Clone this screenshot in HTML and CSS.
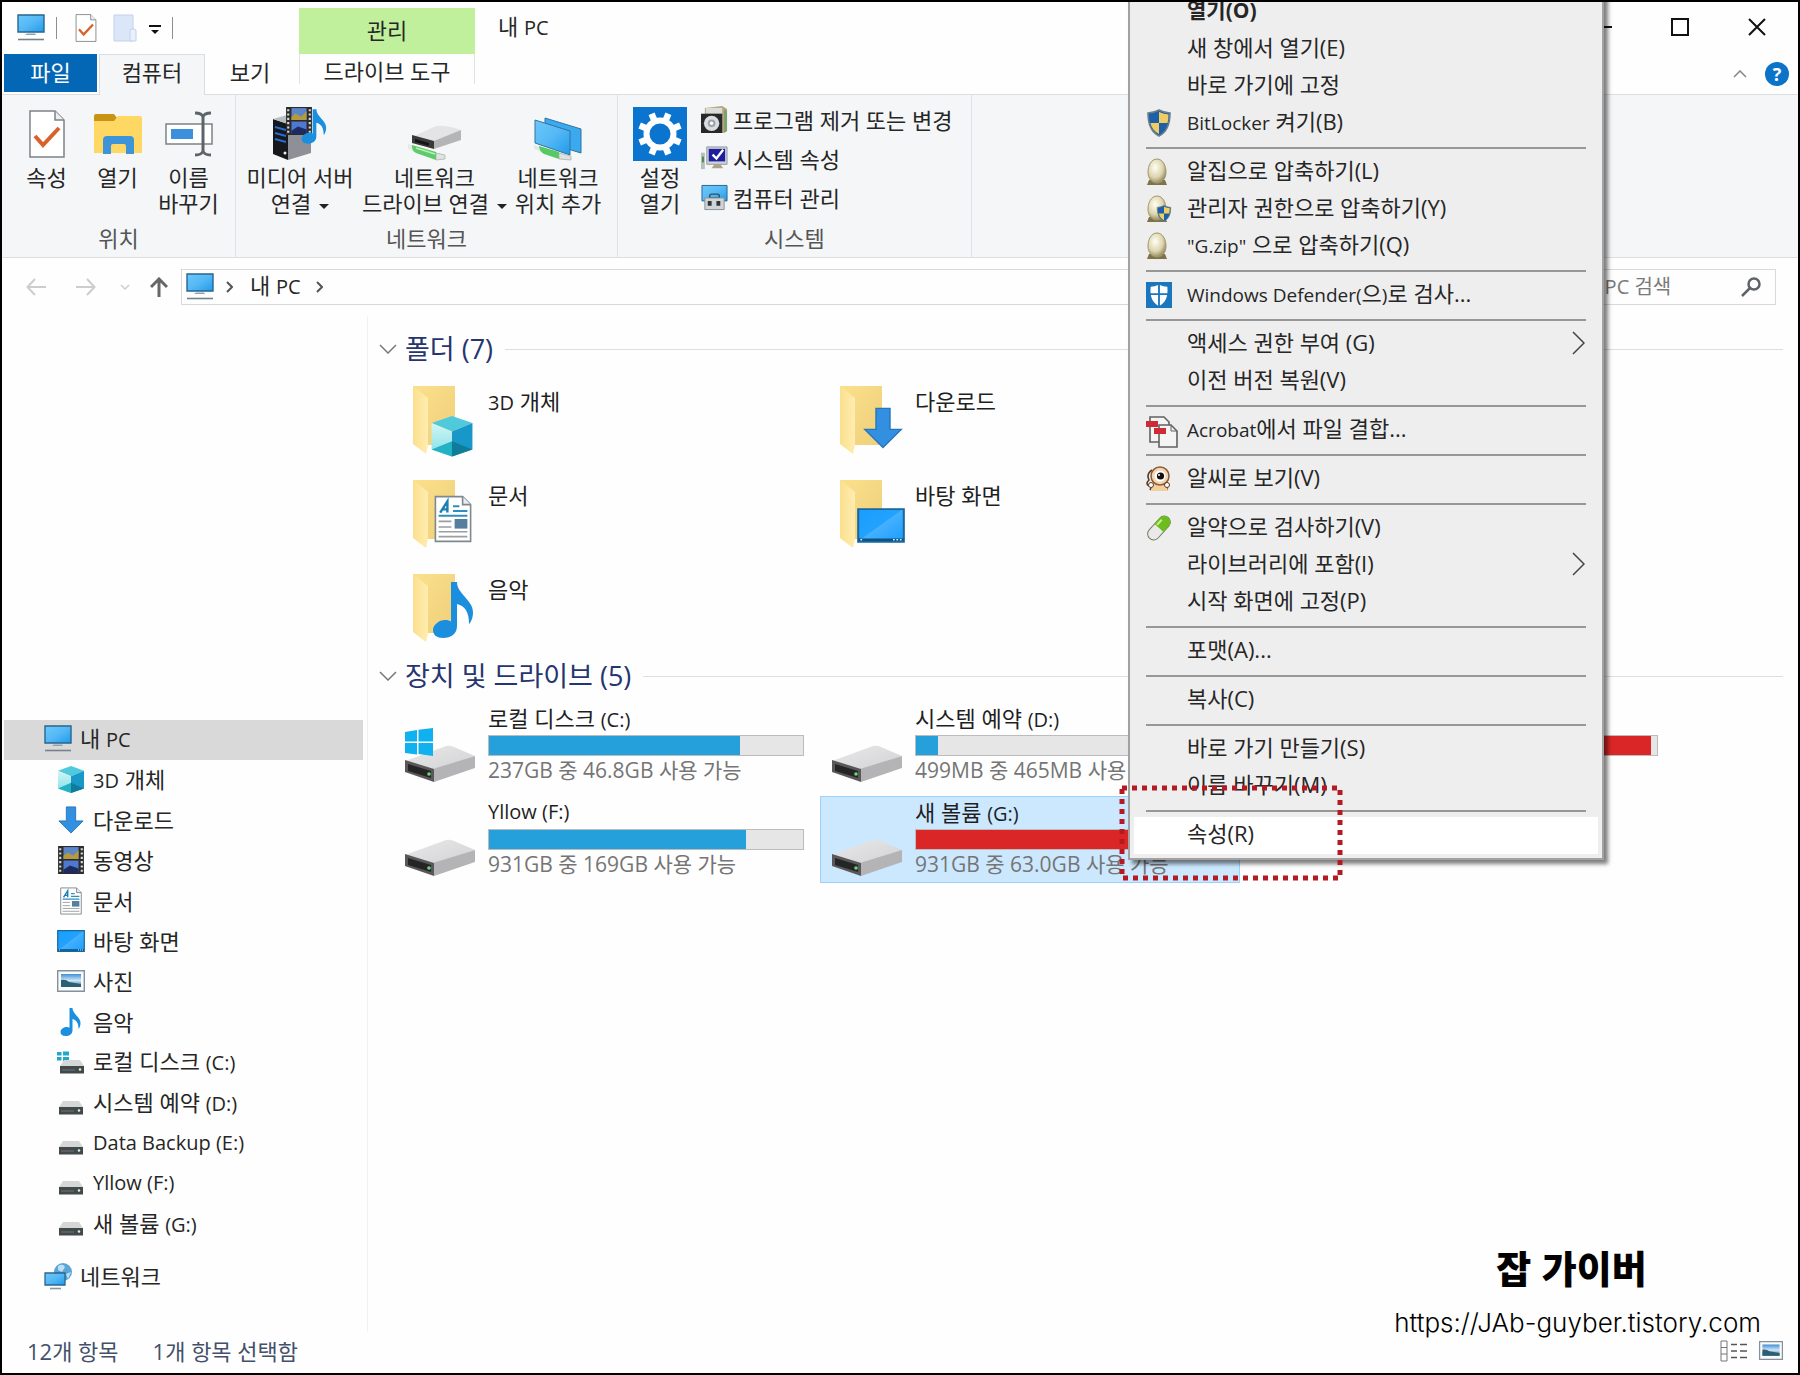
FILE: index.html
```html
<!DOCTYPE html>
<html lang="ko">
<head>
  <meta charset="UTF-8" />
  <meta name="viewport" content="width=device-width, initial-scale=1.0" />
  <title>내 PC</title>
  <link rel="stylesheet" href="styles.css">
</head>
<body>
  <!-- iconos compartidos -->
  <svg class="sprite" width="0" height="0" aria-hidden="true">
    <defs>
      <linearGradient id="gScreen" x1="0" y1="0" x2="1" y2="1">
        <stop offset="0" stop-color="#6cc8fb" /><stop offset=".5" stop-color="#55b8f5" /><stop offset="1" stop-color="#1e9bea" />
      </linearGradient>
      <linearGradient id="gDesk" x1="0" y1="0" x2="1" y2="1">
        <stop offset="0" stop-color="#1a9dfc" /><stop offset=".48" stop-color="#22a2ff" /><stop offset=".5" stop-color="#45b0ff" /><stop offset="1" stop-color="#1a9dfc" />
      </linearGradient>
      <linearGradient id="gFolder" x1="0" y1="0" x2="1" y2="1">
        <stop offset="0" stop-color="#fbe08c" /><stop offset="1" stop-color="#efcf7a" />
      </linearGradient>
      <linearGradient id="gFlap" x1="0" y1="0" x2="1" y2="0">
        <stop offset="0" stop-color="#fbdf8e" /><stop offset="1" stop-color="#ffedb0" />
      </linearGradient>
      <linearGradient id="gTop" x1="0" y1="0" x2="1" y2="1">
        <stop offset="0" stop-color="#e9e9ea" /><stop offset="1" stop-color="#d2d2d4" />
      </linearGradient>
      <linearGradient id="gCube" x1="0" y1="0" x2="0" y2="1">
        <stop offset="0" stop-color="#d4f5f5" /><stop offset="1" stop-color="#7fe0e6" />
      </linearGradient>
      <radialGradient id="gEgg" cx=".4" cy=".35" r=".7">
        <stop offset="0" stop-color="#fffef2" /><stop offset=".6" stop-color="#ddd5b0" /><stop offset="1" stop-color="#8d8256" />
      </radialGradient>
      <linearGradient id="gPhoto" x1="0" y1="0" x2="0" y2="1">
        <stop offset="0" stop-color="#3f8fd6" /><stop offset=".5" stop-color="#cfe6f5" /><stop offset="1" stop-color="#2f6f93" />
      </linearGradient>
    </defs>

    <symbol id="i-pc" viewBox="0 0 28 28">
      <path d="M1 1h26v17H1z" fill="url(#gScreen)" stroke="#27668f" stroke-width="1.4" />
      <path d="M10 19.500h8l1 1.500H8z" fill="#8ea3b0" />
      <path d="M1 25.500h26" stroke="#75828b" stroke-width="1.600" />
    </symbol>
    <symbol id="i-check" viewBox="0 0 36 48">
      <path d="M1 1h25l9 9v37H1z" fill="#fff" stroke="#7d8388" stroke-width="1.500" />
      <path d="M26 1v9h9" fill="#eee" stroke="#7d8388" stroke-width="1.500" />
      <path d="M6 26l8 9 16-17" fill="none" stroke="#d9622b" stroke-width="4" />
    </symbol>
    <symbol id="i-newfolder" viewBox="0 0 24 28">
      <path d="M1 1h19v26H1z" fill="#dbe7f8" stroke="#c0d2ea" />
      <path d="M17 17q0-2 2-2h2q2 0 2 2v10h-6z" fill="#e8f0fb" stroke="#c0d2ea" />
    </symbol>
    <symbol id="i-open" viewBox="0 0 48 42">
      <path d="M0 3q0-2 2-2h18l3 4v5H0z" fill="#c99413" />
      <path d="M0 8h20l4-5h22q2 0 2 2v35H0z" fill="#ffd863" />
      <path d="M9 41V27q0-4 4-4h23q4 0 4 4v14h-8v-8q0-2-2-2H19q-2 0-2 2v8z" fill="#3d94d8" />
    </symbol>
    <symbol id="i-rename" viewBox="0 0 48 46">
      <path d="M1 13h46v20H1z" fill="#fff" stroke="#7c8286" stroke-width="1.500" />
      <path d="M6 18h22v10H6z" fill="#3a90dd" />
      <path d="M30 2q7 0 8 4 1-4 8-4M38 5v36M30 44q7 0 8-4 1 4 8 4" fill="none" stroke="#5d6469" stroke-width="3" />
    </symbol>
    <symbol id="i-film" viewBox="0 0 24 26">
      <path d="M0 0h24v26H0z" fill="#2b2b2b" />
      <path d="M2 2v24M22 2v24" stroke="#d8d8d8" stroke-width="2" stroke-dasharray="2 2" />
      <path d="M5 1h14v11H5z" fill="#5b86c9" /><path d="M5 13.500h14V25H5z" fill="#4f79d0" />
      <path d="M5 9l4-3 5 3 5-5v8H5z" fill="#b79a3b" /><path d="M5 22l6-4 8 3v4H5z" fill="#1d2b60" />
    </symbol>
    <symbol id="i-note" viewBox="0 0 22 28">
      <path d="M9.500 0h3c0 6 8 9 8 15 0 3-1 5-2 6 0-6-2-9-6-10v11c0 4-3 6-7 6-3 0-5-1.500-5-4s3-5 6-5c1.500 0 2.300.3 3 .8z" fill="#1b8fdd" />
    </symbol>
    <symbol id="i-media" viewBox="0 0 54 54">
      <path d="M0 12l15 5v36L0 47z" fill="#15181c" /><path d="M15 17l23-5v34l-23 7z" fill="#8d9096" /><path d="M0 12l14-4 24 4-23 5z" fill="#b9bcc2" />
      <path d="M2 20l11 3M2 26l11 3M2 32l11 3" stroke="#2b6cd4" stroke-width="2" />
      <circle cx="12" cy="46" r="1.500" fill="#eee" />
      <use href="#i-film" x="13" y="0" width="26" height="28" />
      <use href="#i-note" x="28" y="1" width="27" height="37" />
    </symbol>
    <symbol id="i-netdrive" viewBox="0 0 54 36">
      <path d="M4 12L28 1q10-1 25 4L26 17z" fill="#e4e4e6" /><path d="M26 16L53 5v10L26 24z" fill="#b5b5b8" />
      <path d="M4 10l22 6v8L4 18z" fill="#3a3a3d" /><path d="M7 14l14 4v3L7 17z" fill="#141414" />
      <path d="M0 19l4 1v5l-4-1z" fill="#e8ece8" /><path d="M4 20l24 7v8L8 28q-5-3-4-8z" fill="#5fca6a" /><path d="M8 23l19 6" stroke="#b8f0b8" stroke-width="1.500" />
      <path d="M28 28l9 2v4l-9 1z" fill="#dfe3e1" stroke="#a5aca7" stroke-width=".7" />
    </symbol>
    <symbol id="i-netplace" viewBox="0 0 48 44">
      <path d="M11 1l36 11v24L11 25z" fill="#3ba9ee" stroke="#31749f" />
      <path d="M1 3l35 11v24L1 26z" fill="url(#gScreen)" stroke="#31749f" />
      <path d="M0 28l6 2v4l-6-2z" fill="#e4e8e4" /><path d="M5 29l20 6v7L10 37q-5-3-5-8z" fill="#58c865" />
      <path d="M25 36l12 3v4l-12-1z" fill="#dde1df" stroke="#a5aca7" stroke-width=".7" />
    </symbol>
    <symbol id="i-gear" viewBox="0 0 54 54">
      <path d="M0 0h54v54H0z" fill="#0a74cf" />
      <circle cx="27" cy="27" r="13.500" fill="none" stroke="#fff" stroke-width="6" />
      <g stroke="#fff" stroke-width="6.500">
        <path d="M27 5v7M27 42v7M5 27h7M42 27h7" transform="rotate(22.500 27 27)" />
        <path d="M27 5v7M27 42v7M5 27h7M42 27h7" transform="rotate(-22.500 27 27)" />
      </g>
    </symbol>
    <symbol id="i-programs" viewBox="0 0 28 28">
      <path d="M4 2l18-2 5 3v23l-4 2H4z" fill="#b8a47c" /><path d="M5 2h17v6H5z" fill="#d9dcd9" /><path d="M24 4l3 1v21l-3 2z" fill="#77a36f" />
      <path d="M0 8h22v20H0z" fill="#26282a" /><circle cx="11" cy="18" r="8" fill="#dadde0" /><circle cx="11" cy="18" r="4" fill="#9ea3a8" /><circle cx="11" cy="18" r="1.800" fill="#fff" />
    </symbol>
    <symbol id="i-sysprop" viewBox="0 0 28 26">
      <path d="M6 1h21v18H6z" fill="#ccd1d8" stroke="#9299a3" /><path d="M8 3h17v13H8z" fill="#1e1ea0" />
      <path d="M12 9l4 4 7-9" fill="none" stroke="#fff" stroke-width="2.500" /><path d="M14 19h6l3 4H11z" fill="#aaa38a" />
      <path d="M0 7h4v17H0z" fill="#b8bdc0" /><path d="M1 11h2v6H1z" fill="#4a8b4a" />
    </symbol>
    <symbol id="i-manage" viewBox="0 0 28 27">
      <path d="M1 1h26v16H1z" fill="url(#gScreen)" stroke="#25658f" />
      <path d="M9 12q0-2 2-2h6q2 0 2 2v2H9z" fill="none" stroke="#31505f" stroke-width="1.500" />
      <path d="M4 14h20v12H4z" fill="#cfd4d6" stroke="#899297" /><path d="M7 17h4v5H7zM16 17h4v5h-4z" fill="#30363a" />
    </symbol>

    <symbol id="i-cube" viewBox="0 0 28 30" preserveAspectRatio="none">
      <path d="M14 0l13 5-13 6L1 5z" fill="#4fc9dc" /><path d="M1 5l13 6v18L1 24z" fill="url(#gCube)" /><path d="M14 11l13-6v19l-13 5z" fill="#1898c8" />
      <path d="M1 24l13-6v11z" fill="#22b2c4" /><path d="M27 24l-13-6v11z" fill="#0f7d99" />
    </symbol>
    <symbol id="i-down" viewBox="0 0 28 30">
      <path d="M9 1h10v15h8L14 29 1 16h8z" fill="#338fe0" stroke="#2676bd" />
    </symbol>
    <symbol id="i-doc" viewBox="0 0 24 30">
      <path d="M1 1h17l5 5v23H1z" fill="#fff" stroke="#7e888e" /><path d="M18 1v5h5" fill="#e8edf0" stroke="#7e888e" />
      <path d="M4 11L8.500 4v7M5.500 9h3" fill="none" stroke="#1a7fb5" stroke-width="1.500" />
      <path d="M12 7h4M12 10h9M3 13h18" stroke="#2f8ebd" stroke-width="1.300" />
      <path d="M3 16.500h8M3 20h8M3 23h18M3 26h18" stroke="#9a9fa3" stroke-width="1" /><path d="M13 15h8v6h-8z" fill="#54809e" />
    </symbol>
    <symbol id="i-desktop" viewBox="0 0 28 22" preserveAspectRatio="none">
      <path d="M.7.7h26.600v20.600H.7z" fill="url(#gDesk)" stroke="#17689f" stroke-width="1.200" />
      <path d="M1 20h26" stroke="#0c5384" stroke-width="1.600" /><path d="M2 20h1.500M21 20h5" stroke="#d8ecf8" stroke-width="1" stroke-dasharray="1 1" />
    </symbol>
    <symbol id="i-photo" viewBox="0 0 28 22">
      <path d="M.7.7h26.600v20.600H.7z" fill="#fafafa" stroke="#84919b" stroke-width="1.400" /><path d="M4 4h20v13H4z" fill="url(#gPhoto)" />
      <path d="M4 10q5-1 8 2l12 2v3H4z" fill="#2b5f73" />
    </symbol>
    <symbol id="i-hdd" viewBox="0 0 24 14">
      <path d="M4 0h16l4 6H0z" fill="#d5d7d7" /><path d="M0 6h24v7.500H0z" fill="#43484a" /><path d="M2 10h13" stroke="#707576" /><circle cx="20" cy="9.500" r="1.300" fill="#c9f5cf" />
    </symbol>
    <symbol id="i-hddwin" viewBox="0 0 28 24">
      <path d="M0 2h4.500v3.500H0zM6 1.500h6v4H6zM0 7h4.500v3.500H0zM6 7h6v4H6z" fill="#22a7c9" />
      <use href="#i-hdd" x="3" y="10" width="24" height="14" />
    </symbol>
    <symbol id="i-network" viewBox="0 0 28 28">
      <circle cx="19" cy="10" r="9" fill="#5aa6d8" /><path d="M14 4q5-3 7 1l-3 5-4-2zM22 12l5-2-3 7z" fill="#bfe0f0" />
      <path d="M1 11h20v12H1z" fill="url(#gScreen)" stroke="#2d658b" stroke-width="1.300" /><path d="M6 26.500h11" stroke="#8695a0" stroke-width="1.600" />
    </symbol>

    <!-- iconos grandes de carpetas y discos -->
    <symbol id="i-folder" viewBox="0 0 72 72">
      <path d="M9 2h42v59H22z" fill="url(#gFolder)" /><path d="M9 2l15 12v47l-2 9L9 60z" fill="url(#gFlap)" />
    </symbol>
    <symbol id="i-disk" viewBox="0 0 72 72">
      <path d="M1 50l41-15q4-1 8 1l21 9-42 14z" fill="url(#gTop)" /><path d="M29 58l42-13v12L30 71z" fill="#b4b4b7" />
      <path d="M1 49l29 9v13L1 61z" fill="#58585a" /><path d="M4 53l23 7v7L4 60z" fill="#252525" /><circle cx="25" cy="63" r="1.800" fill="#6fd57c" />
    </symbol>
    <symbol id="i-winlogo" viewBox="0 0 28 28">
      <path d="M0 4l12-2v11.500H0zM13.500 1.800L28 0v13.500H13.500zM0 15h12v11.500L0 25zM13.500 15H28v13l-14.500-2z" fill="#0fb1ee" />
    </symbol>

    <!-- iconos del menu contextual -->
    <symbol id="i-shield" viewBox="0 0 26 28">
      <path d="M13 1q6 3 11 3c0 11-3 19-11 23C5 23 2 15 2 4q5 0 11-3z" fill="#1d5fa8" stroke="#6e7f8c" stroke-width="1.600" />
      <path d="M13 3q5 2 9.500 2.500 0 4.500-1 8.500H13zM4.500 14H13v11c-4.500-2.500-7.500-6-8.500-11z" fill="#f0cd62" />
    </symbol>
    <symbol id="i-egg" viewBox="0 0 26 28">
      <path d="M1 27l2-5h16l2 5z" fill="#7d7248" /><path d="M11 1c6 0 9 7 9 13 0 7-4 11-9 11s-9-4-9-11C2 8 5 1 11 1z" fill="url(#gEgg)" stroke="#a3986e" />
    </symbol>
    <symbol id="i-eggadmin" viewBox="0 0 26 28">
      <use href="#i-egg" width="26" height="28" /><use href="#i-shield" x="10" y="10" width="16" height="17" />
    </symbol>
    <symbol id="i-defender" viewBox="0 0 28 28">
      <path d="M0 0h28v28H0z" fill="#1b77bd" /><path d="M14 3q5 2 9 2c1 11-2 17-9 21C7 22 4 16 5 5q4 0 9-2z" fill="#fff" />
      <path d="M14 2v25M4 13h20" stroke="#1b77bd" stroke-width="2" />
    </symbol>
    <symbol id="i-acrobat" viewBox="0 0 32 32">
      <path d="M4 1h14l5 5v20H4z" fill="#f4f4f4" stroke="#626262" stroke-width="1.600" /><path d="M13 9h12l6 6v16H13z" fill="#f4f4f4" stroke="#626262" stroke-width="1.600" />
      <path d="M25 9v6h6" fill="none" stroke="#626262" /><path d="M0 5h12v6H0zM8 12h12v6H8z" fill="#cf2b36" />
    </symbol>
    <symbol id="i-alsee" viewBox="0 0 26 26">
      <path d="M6 4Q0 8 3 14q-4 4 0 6M5 18q1 3-1 6M20 18q2 3 1 6" fill="none" stroke="#5c3a20" stroke-width="1.600" /><path d="M7 17h13l2 8H5z" fill="#f3cf9c" />
      <circle cx="14" cy="10" r="9" fill="#f3d7b4" stroke="#8a5a34" stroke-width="1.500" /><circle cx="14" cy="10" r="5.500" fill="#fff" /><circle cx="14.500" cy="10" r="3.600" fill="#15100d" /><circle cx="13" cy="9" r="1" fill="#fff" />
      <circle cx="5" cy="19" r="2.500" fill="#fff" stroke="#5c3a20" /><circle cx="21" cy="19" r="2.500" fill="#fff" stroke="#5c3a20" />
    </symbol>
    <symbol id="i-pill" viewBox="0 0 26 26">
      <g transform="rotate(-48 13 13)">
        <rect x="-1" y="7" width="28" height="12" rx="6" fill="#e9e9e9" stroke="#6f7d60" /><path d="M13 7h8a6 6 0 010 12h-8z" fill="#6dbd1f" /><path d="M14 9.500h7" stroke="#c9f08b" stroke-width="2" />
      </g>
    </symbol>
  </svg>

  <div class="window">
    <header class="titlebar">
      <div class="quick">
        <svg class="ico-28"><use href="#i-pc" /></svg>
        <span class="bar-sep"></span>
        <svg class="quick-check"><use href="#i-check" /></svg>
        <svg class="quick-folder"><use href="#i-newfolder" /></svg>
        <svg class="quick-more" viewBox="0 0 12 10"><path d="M0 1h12" stroke="#111" stroke-width="2" /><path d="M2 5h8l-4 4z" fill="#111" /></svg>
        <span class="bar-sep"></span>
      </div>
      <div class="context-label">관리</div>
      <h1 class="title">내 <span class="latin">PC</span></h1>
      <div class="controls">
        <button type="button" aria-label="최소화"><svg viewBox="0 0 18 18"><path d="M0 9h18" /></svg></button>
        <button type="button" aria-label="최대화"><svg viewBox="0 0 18 18"><path d="M1 1h16v16H1z" /></svg></button>
        <button type="button" aria-label="닫기"><svg viewBox="0 0 18 18"><path d="M1 1l16 16M17 1L1 17" /></svg></button>
      </div>
    </header>

    <nav class="tabs">
      <button type="button" class="tab tab-file">파일</button>
      <button type="button" class="tab tab-active">컴퓨터</button>
      <button type="button" class="tab tab-view">보기</button>
      <button type="button" class="tab tab-drive">드라이브 도구</button>
      <div class="tabs-right">
        <svg class="collapse" viewBox="0 0 14 8"><path d="M1 7l6-6 6 6" fill="none" stroke="#8a8a8a" stroke-width="1.600" /></svg>
        <button type="button" class="help">?</button>
      </div>
    </nav>

    <section class="ribbon">
      <div class="group group-place">
        <div class="group-body">
          <button type="button" class="big"><span class="big-ico"><svg width="36" height="48"><use href="#i-check" /></svg></span>속성</button>
          <button type="button" class="big"><span class="big-ico"><svg width="48" height="42"><use href="#i-open" /></svg></span>열기</button>
          <button type="button" class="big"><span class="big-ico"><svg width="48" height="46"><use href="#i-rename" /></svg></span>이름<br>바꾸기</button>
        </div>
        <div class="group-name">위치</div>
      </div>
      <div class="group group-net">
        <div class="group-body">
          <button type="button" class="big big-media"><span class="big-ico"><svg width="54" height="54"><use href="#i-media" /></svg></span>미디어 서버<br>연결<i class="caret"></i></button>
          <button type="button" class="big big-map"><span class="big-ico big-ico-low"><svg width="54" height="36"><use href="#i-netdrive" /></svg></span>네트워크<br>드라이브 연결<i class="caret"></i></button>
          <button type="button" class="big big-add"><span class="big-ico big-ico-low"><svg width="48" height="44"><use href="#i-netplace" /></svg></span>네트워크<br>위치 추가</button>
        </div>
        <div class="group-name">네트워크</div>
      </div>
      <div class="group group-sys">
        <div class="group-body">
          <button type="button" class="big big-set"><span class="big-ico"><svg width="54" height="54"><use href="#i-gear" /></svg></span>설정<br>열기</button>
          <div class="small-list">
            <button type="button" class="small"><svg><use href="#i-programs" /></svg>프로그램 제거 또는 변경</button>
            <button type="button" class="small"><svg><use href="#i-sysprop" /></svg>시스템 속성</button>
            <button type="button" class="small"><svg><use href="#i-manage" /></svg>컴퓨터 관리</button>
          </div>
        </div>
        <div class="group-name">시스템</div>
      </div>
    </section>

    <div class="navbar">
      <svg class="nav-arrow" viewBox="0 0 20 18"><path d="M20 9H2M9 1L1.500 9 9 17" stroke="#cdcdcd" /></svg>
      <svg class="nav-arrow" viewBox="0 0 20 18"><path d="M0 9h18M11 1l7.500 8-7.500 8" stroke="#cdcdcd" /></svg>
      <svg class="nav-chev" viewBox="0 0 10 6"><path d="M1 1l4 4 4-4" fill="none" stroke="#cdcdcd" stroke-width="1.500" /></svg>
      <svg class="nav-up" viewBox="0 0 18 20"><path d="M9 20V2M1 10l8-8 8 8" /></svg>
      <div class="address">
        <svg class="ico-28"><use href="#i-pc" /></svg>
        <svg class="crumb" viewBox="0 0 7 12"><path d="M1 1l5 5-5 5" /></svg>
        <a href="#" class="crumb-link">내 <span class="latin">PC</span></a>
        <svg class="crumb" viewBox="0 0 7 12"><path d="M1 1l5 5-5 5" /></svg>
      </div>
      <div class="search">
        <input type="text" aria-label="내 PC 검색" placeholder="내 PC 검색">
        <svg viewBox="0 0 20 20"><circle cx="13" cy="7" r="5.500" /><path d="M9 11l-8 8" /></svg>
      </div>
    </div>

    <main class="main">
      <aside class="sidebar">
        <ul class="tree">
          <li class="root selected"><svg><use href="#i-pc" /></svg><span>내 <span class="latin">PC</span></span></li>
          <li><svg><use href="#i-cube" /></svg><span><span class="latin">3D</span> 개체</span></li>
          <li><svg><use href="#i-down" /></svg>다운로드</li>
          <li><svg><use href="#i-film" /></svg>동영상</li>
          <li><svg><use href="#i-doc" /></svg>문서</li>
          <li class="wide"><svg><use href="#i-desktop" /></svg>바탕 화면</li>
          <li><svg><use href="#i-photo" /></svg>사진</li>
          <li><svg><use href="#i-note" /></svg>음악</li>
          <li><svg><use href="#i-hddwin" /></svg><span>로컬 디스크 <span class="latin">(C:)</span></span></li>
          <li class="disk"><svg><use href="#i-hdd" /></svg><span>시스템 예약 <span class="latin">(D:)</span></span></li>
          <li class="disk"><svg><use href="#i-hdd" /></svg><span class="latin">Data Backup (E:)</span></li>
          <li class="disk"><svg><use href="#i-hdd" /></svg><span class="latin">Yllow (F:)</span></li>
          <li class="disk"><svg><use href="#i-hdd" /></svg><span>새 볼륨 <span class="latin">(G:)</span></span></li>
        </ul>
        <div class="tree-net"><svg><use href="#i-network" /></svg>네트워크</div>
      </aside>

      <section class="content">
        <h2 class="section"><svg viewBox="0 0 18 10"><path d="M1 1l8 8 8-8" /></svg>폴더 (7)</h2>
        <ul class="tiles">
          <li class="tile folder"><svg class="pic"><use href="#i-folder" /><use href="#i-cube" x="26" y="32" width="44" height="42" /></svg><span class="name"><span class="latin">3D</span> 개체</span></li>
          <li class="tile folder"><svg class="pic"><use href="#i-folder" /><use href="#i-down" x="31" y="23" width="42" height="42" /></svg><span class="name">다운로드</span></li>
          <li class="tile folder"><svg class="pic"><use href="#i-folder" /></svg><span class="name">동영상</span></li>
          <li class="tile folder"><svg class="pic"><use href="#i-folder" /><use href="#i-doc" x="29" y="17" width="40" height="48" /></svg><span class="name">문서</span></li>
          <li class="tile folder"><svg class="pic"><use href="#i-folder" /><use href="#i-desktop" x="26" y="30" width="48" height="35" /></svg><span class="name">바탕 화면</span></li>
          <li class="tile folder"><svg class="pic"><use href="#i-folder" /></svg><span class="name">사진</span></li>
          <li class="tile folder"><svg class="pic"><use href="#i-folder" /><use href="#i-note" x="28" y="10" width="44" height="56" /></svg><span class="name">음악</span></li>
        </ul>

        <h2 class="section"><svg viewBox="0 0 18 10"><path d="M1 1l8 8 8-8" /></svg>장치 및 드라이브 (5)</h2>
        <ul class="tiles">
          <li class="tile"><svg class="pic"><use href="#i-disk" /><use href="#i-winlogo" x="1" y="17" width="28" height="28" /></svg>
            <div class="drive"><span class="name">로컬 디스크 <span class="latin">(C:)</span></span><div class="usage"><div class="used" style="width: 80%"></div></div><span class="free">237GB 중 46.8GB 사용 가능</span></div></li>
          <li class="tile"><svg class="pic"><use href="#i-disk" /></svg>
            <div class="drive"><span class="name">시스템 예약 <span class="latin">(D:)</span></span><div class="usage"><div class="used" style="width: 7%"></div></div><span class="free">499MB 중 465MB 사용 가능</span></div></li>
          <li class="tile"><svg class="pic"><use href="#i-disk" /></svg>
            <div class="drive"><span class="name latin">Data Backup (E:)</span><div class="usage"><div class="used full" style="width: 98%"></div></div></div></li>
          <li class="tile"><svg class="pic"><use href="#i-disk" /></svg>
            <div class="drive"><span class="name latin">Yllow (F:)</span><div class="usage"><div class="used" style="width: 82%"></div></div><span class="free">931GB 중 169GB 사용 가능</span></div></li>
          <li class="tile tile-selected"><svg class="pic"><use href="#i-disk" /></svg>
            <div class="drive"><span class="name">새 볼륨 <span class="latin">(G:)</span></span><div class="usage"><div class="used full" style="width: 93%"></div></div><span class="free">931GB 중 63.0GB 사용 가능</span></div></li>
        </ul>
      </section>
    </main>

    <footer class="status">
      <span>12개 항목</span>
      <span>1개 항목 선택함</span>
      <div class="views">
        <svg width="28" height="22" viewBox="0 0 28 22"><path d="M1 1h6v20H1zM1 7.500h6M1 14h6" fill="none" stroke="#777" /><path d="M11 4.500h6M20 4.500h7M11 11h6M20 11h7M11 17.500h6M20 17.500h7" stroke="#555" stroke-width="1.500" /></svg>
        <svg width="24" height="19"><use href="#i-photo" /></svg>
      </div>
    </footer>

    <ul class="menu">
      <li class="bold">열기(O)</li>
      <li>새 창에서 열기(E)</li>
      <li>바로 가기에 고정</li>
      <li><svg><use href="#i-shield" /></svg><span class="latin">BitLocker</span> 켜기(B)</li>
      <li class="line"></li>
      <li><svg><use href="#i-egg" /></svg>알집으로 압축하기(L)</li>
      <li><svg><use href="#i-eggadmin" /></svg>관리자 권한으로 압축하기(Y)</li>
      <li><svg><use href="#i-egg" /></svg><span class="latin">"G.zip"</span> 으로 압축하기(Q)</li>
      <li class="line"></li>
      <li><svg><use href="#i-defender" /></svg><span class="latin">Windows Defender(</span>으<span class="latin">)</span>로 검사...</li>
      <li class="line"></li>
      <li>액세스 권한 부여 (G)<svg class="sub" viewBox="0 0 13 24"><path d="M1 1l11 11L1 23" /></svg></li>
      <li>이전 버전 복원(V)</li>
      <li class="line"></li>
      <li><svg class="acro"><use href="#i-acrobat" /></svg><span class="latin">Acrobat</span>에서 파일 결합...</li>
      <li class="line"></li>
      <li><svg><use href="#i-alsee" /></svg>알씨로 보기(V)</li>
      <li class="line"></li>
      <li><svg><use href="#i-pill" /></svg>알약으로 검사하기(V)</li>
      <li>라이브러리에 포함(I)<svg class="sub" viewBox="0 0 13 24"><path d="M1 1l11 11L1 23" /></svg></li>
      <li>시작 화면에 고정(P)</li>
      <li class="line"></li>
      <li>포맷(A)...</li>
      <li class="line"></li>
      <li>복사(C)</li>
      <li class="line"></li>
      <li>바로 가기 만들기(S)</li>
      <li>이름 바꾸기(M)</li>
      <li class="line"></li>
      <li class="hover">속성(R)</li>
    </ul>

    <svg class="marker" viewBox="0 0 224 96"><rect x="3" y="3" width="218" height="90" /></svg>

    <div class="credit">
      <strong>잡 가이버</strong>
      <span>https://JAb-guyber.tistory.com</span>
    </div>
  </div>
</body>
</html>
```
FILE: styles.css
```css
* {
  box-sizing: border-box;
}
body {
  margin: 0;
  font-family: "Open Sans", "Noto Sans CJK KR", sans-serif;
  font-size: 22px;
  line-height: 26px;
  color: #262626;
}
ul {
  list-style: none;
  margin: 0;
  padding: 0;
}
h1, h2 {
  margin: 0;
  font-weight: normal;
}
button {
  font: inherit;
  color: inherit;
  background: none;
  border: none;
  padding: 0;
  white-space: nowrap;
}
svg {
  flex: none;
}
.sprite {
  position: absolute;
}
.latin {
  font-size: 20px;
}
.ico-28 {
  width: 28px;
  height: 28px;
}
.window {
  position: relative;
  display: flex;
  flex-direction: column;
  min-height: 100vh;
  border: 2px solid #000;
  background: #fefefe;
  overflow: hidden;
}

/* barra de titulo */
.titlebar {
  display: flex;
  height: 52px;
}
.quick {
  display: flex;
  align-items: center;
  width: 297px;
  padding-left: 15px;
}
.bar-sep {
  width: 1px;
  height: 22px;
  margin-left: 11px;
  background: #8d8d8d;
}
.quick-check {
  width: 22px;
  height: 28px;
  margin-left: 18px;
}
.quick-folder {
  width: 24px;
  height: 28px;
  margin-left: 16px;
}
.quick-more {
  width: 12px;
  height: 10px;
  margin: 4px 0 0 12px;
}
.context-label {
  width: 176px;
  height: 46px;
  margin-top: 6px;
  line-height: 44px;
  text-align: center;
  background: #c0f09c;
}
.title {
  padding-left: 23px;
  font-size: 22px;
  line-height: 48px;
}
.controls {
  display: flex;
  height: 50px;
  margin-left: auto;
  padding-right: 3px;
}
.controls button {
  width: 77px;
}
.controls svg {
  width: 18px;
  height: 18px;
  fill: none;
  stroke: #111;
  stroke-width: 2;
}

/* pestañas */
.tabs {
  display: flex;
  height: 40px;
  padding-left: 2px;
}
.tab {
  height: 38px;
  padding-bottom: 2px;
  line-height: 34px;
}
.tab-file {
  width: 93px;
  color: #fff;
  background: #0467b6;
}
.tab-active {
  width: 106px;
  height: 41px;
  margin-left: 2px;
  padding-bottom: 8px;
  border: 1px solid #dcdddf;
  border-bottom: none;
  background: #f4f6f8;
  z-index: 1;
}
.tab-view {
  width: 94px;
  padding-right: 4px;
}
.tab-drive {
  width: 176px;
  height: 30px;
  border: solid #dfe5db;
  border-width: 0 1px;
}
.tabs-right {
  display: flex;
  align-items: center;
  gap: 18px;
  margin-left: auto;
  padding-right: 9px;
}
.collapse {
  width: 14px;
  height: 8px;
}
.help {
  width: 24px;
  height: 24px;
  border-radius: 50%;
  font-size: 18px;
  line-height: 24px;
  font-weight: bold;
  color: #fff;
  background: #0b73c8;
}

/* cinta */
.ribbon {
  display: flex;
  height: 164px;
  border: solid #dcdddf;
  border-width: 1px 0;
  background: #f4f6f8;
}
.group {
  display: flex;
  flex-direction: column;
  justify-content: space-between;
  padding-bottom: 6px;
  border-right: 1px solid #dfe1e4;
}
.group-body {
  display: flex;
}
.group-name {
  text-align: center;
  color: #555;
}
.group-place .group-body {
  padding: 0 11px 0 9px;
}
.group-net .group-body {
  padding: 0 11px 0 5px;
}
.group-sys .group-body {
  padding: 0 18px 0 11px;
}
.big {
  display: block;
  width: 71px;
  padding-top: 12px;
  align-self: flex-start;
}
.big-ico {
  display: flex;
  align-items: center;
  justify-content: center;
  height: 54px;
  margin-bottom: 3px;
}
.big-ico-low {
  align-items: flex-end;
}
.big-media {
  width: 118px;
}
.big-map {
  width: 151px;
}
.big-add {
  width: 96px;
}
.big-set {
  width: 62px;
}
.caret {
  display: inline-block;
  margin-left: 8px;
  border: 5px solid transparent;
  border-top-color: #222;
  border-bottom: none;
  vertical-align: middle;
}
.small-list {
  padding: 5px 0 0 10px;
}
.small {
  display: flex;
  align-items: center;
  gap: 5px;
  height: 39px;
  line-height: 24px;
}
.small svg {
  width: 27px;
  height: 27px;
}

/* navegacion */
.navbar {
  display: flex;
  align-items: center;
  height: 58px;
  padding: 0 22px 0 24px;
}
.nav-arrow {
  width: 20px;
  height: 18px;
  margin-right: 30px;
  fill: none;
  stroke-width: 2;
}
.nav-chev {
  width: 10px;
  height: 6px;
  margin-right: 20px;
  margin-left: -6px;
}
.nav-up {
  width: 18px;
  height: 20px;
  margin-right: 13px;
  fill: none;
  stroke: #666;
  stroke-width: 3;
}
.address {
  display: flex;
  align-items: center;
  flex: 1;
  height: 36px;
  padding-left: 4px;
  border: 1px solid #d9d9d9;
}
.crumb {
  width: 7px;
  height: 12px;
  margin: 0 12px;
  fill: none;
  stroke: #555;
  stroke-width: 2;
}
.crumb-link {
  margin: 0 3px 0 5px;
  padding-bottom: 2px;
  color: inherit;
  text-decoration: none;
}
.search {
  display: flex;
  align-items: center;
  width: 216px;
  height: 36px;
  margin-left: 12px;
  padding: 0 14px 0 20px;
  border: 1px solid #d9d9d9;
}
.search input {
  flex: 1;
  min-width: 0;
  padding: 0;
  border: none;
  outline: none;
  background: none;
  font: inherit;
  font-size: 20px;
}
.search input::placeholder {
  color: #7a7a7a;
  opacity: 1;
}
.search svg {
  width: 20px;
  height: 20px;
  fill: none;
  stroke: #5f6368;
  stroke-width: 2.500;
}

/* panel lateral */
.main {
  display: flex;
  flex: 1;
}
.sidebar {
  display: flex;
  flex-direction: column;
  justify-content: flex-end;
  width: 366px;
  padding: 0 4px 36px 2px;
  border-right: 1px solid #f1f1f1;
}
.tree {
  display: grid;
  grid-auto-rows: 1fr;
  height: 525px;
}
.tree li, .tree-net {
  display: flex;
  align-items: center;
  gap: 8px;
  padding-left: 53px;
  line-height: 24px;
}
.tree li {
  padding-bottom: 2px;
}
.tree svg, .tree-net svg {
  width: 28px;
  height: 28px;
}
.tree .root, .tree-net {
  padding-left: 40px;
}
.tree .disk svg {
  height: 14px;
  margin-top: 10px;
}
.tree .wide svg {
  height: 22px;
}
.tree .selected {
  background: #d9d9d9;
}
.tree-net {
  height: 40px;
  margin-top: 11px;
}

/* contenido */
.content {
  flex: 1;
  min-width: 0;
  padding: 7px 15px 0 11px;
}
.section {
  display: flex;
  align-items: center;
  height: 52px;
  font-size: 27px;
  line-height: 52px;
  color: #26356f;
}
.section svg {
  width: 18px;
  height: 10px;
  margin-right: 8px;
  fill: none;
  stroke: #777;
  stroke-width: 1.500;
}
.section::after {
  content: "";
  flex: 1;
  height: 1px;
  margin-left: 12px;
  background: #dedede;
}
.tiles {
  display: grid;
  grid-template-columns: repeat(auto-fill, 420px);
  grid-auto-rows: 87px;
  gap: 7px;
  padding-left: 14px;
}
.tile {
  display: flex;
  align-items: flex-start;
  gap: 12px;
  padding: 3px 8px 0 10px;
  border: 1px solid transparent;
}
.tile-selected {
  border-color: #99d1ff;
  background: #cce8ff;
}
.pic {
  width: 72px;
  height: 72px;
  margin-top: 5px;
  overflow: visible;
}
.name {
  color: #1f1f1f;
}
.folder .name {
  padding-top: 9px;
}
.drive {
  display: grid;
  grid-template-rows: 29px 21px 26px;
  width: 316px;
}
.drive .name, .free {
  line-height: 24px;
  white-space: nowrap;
}
.usage {
  border: 1px solid #bcbcbc;
  background: #e6e6e6;
}
.used {
  height: 100%;
  background: #26a0da;
}
.used.full {
  background: #da2626;
}
.free {
  padding-top: 2px;
  font-size: 21px;
  color: #757575;
}

/* barra de estado */
.status {
  display: flex;
  align-items: center;
  gap: 34px;
  height: 41px;
  padding: 0 15px 4px 25px;
  color: #44506a;
}
.views {
  display: flex;
  align-items: center;
  gap: 11px;
  margin-left: auto;
}

/* menu contextual, abierto sobre la ventana */
.menu {
  position: absolute;
  top: -14px;
  right: 194px;
  width: 476px;
  padding: 4px;
  border: 2px solid #a2a2a2;
  background: #eee;
  box-shadow: 4px 4px 4px rgba(0, 0, 0, 0.5);
}
.menu li {
  position: relative;
  height: 37px;
  padding-left: 53px;
  line-height: 33px;
  white-space: nowrap;
}
.menu .latin {
  font-size: 19px;
}
.menu svg {
  position: absolute;
  top: 4px;
  left: 12px;
  width: 26px;
  height: 28px;
}
.menu .acro {
  width: 32px;
  height: 32px;
}
.menu .sub {
  top: 5px;
  left: auto;
  right: 13px;
  width: 13px;
  height: 24px;
  fill: none;
  stroke: #444;
  stroke-width: 1.500;
}
.menu .line {
  height: 2px;
  margin: 5px 12px;
  background: #979797;
}
.menu .bold {
  font-size: 21px;
  font-weight: bold;
}
.menu .hover {
  background: #fff;
}

/* recuadro rojo alrededor de la ultima opcion */
.marker {
  position: absolute;
  top: 783px;
  right: 455px;
  width: 224px;
  height: 96px;
}
.marker rect {
  fill: none;
  stroke: #b51a22;
  stroke-width: 5;
  stroke-dasharray: 5 5;
}

.credit {
  position: absolute;
  right: 37px;
  bottom: 23px;
  display: flex;
  flex-direction: column;
  color: #000;
}
.credit strong {
  padding-left: 102px;
  font-family: "Noto Sans CJK KR", sans-serif;
  font-size: 38px;
  font-weight: 900;
  line-height: 58px;
}
.credit span {
  font-family: Inter, sans-serif;
  font-size: 26px;
  font-weight: 300;
  line-height: 54px;
}
```
